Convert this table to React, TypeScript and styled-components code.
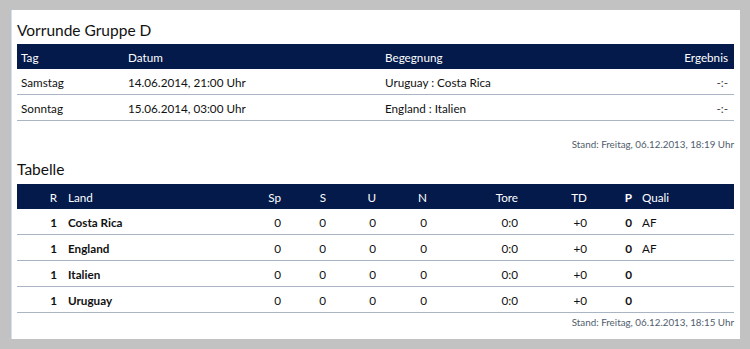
import styled, { createGlobalStyle } from 'styled-components';

const GlobalStyle = createGlobalStyle`
  html, body {
    margin: 0;
    padding: 0;
    background: #c2c2c2;
    font-family: Lato, "Noto Sans", sans-serif;
  }
`;

const Panel = styled.div`
  box-sizing: border-box;
  margin: 10px 0 0 11px;
  width: 729px;
  height: 329px;
  background: #fff;
  border-left: 1px solid #cfe2f2;
  padding: 10px 6px 0 5px;
`;

const Title = styled.h2`
  margin: 0 0 4px;
  font-size: 15.5px;
  line-height: 20px;
  font-weight: normal;
  color: #111;
`;

const Table = styled.table`
  width: 717px;
  border-collapse: collapse;
  table-layout: fixed;
  font-size: 11.7px;
  color: #111;
`;

const Head = styled.th<{ $align?: string; $bold?: boolean; $pad?: number }>`
  background: #031a4b;
  color: #fff;
  height: 25px;
  padding: 0 4px 0 ${(p) => p.$pad ?? 4}px;
  text-align: ${(p) => p.$align ?? 'left'};
  font-weight: ${(p) => (p.$bold ? 'bold' : 'normal')};
  box-sizing: border-box;
`;

const Cell = styled.td<{ $align?: string; $bold?: boolean; $pad?: number }>`
  height: 25px;
  padding: 0 4px 0 ${(p) => p.$pad ?? 4}px;
  border-bottom: 1px solid #a9b5c3;
  text-align: ${(p) => p.$align ?? 'left'};
  font-weight: ${(p) => (p.$bold ? 'bold' : 'normal')};
`;

const Result = styled(Cell)`
  padding-right: 6px;
  color: #444;
`;

const Stand = styled.div<{ $top: number }>`
  text-align: right;
  font-size: 9.8px;
  line-height: 14px;
  color: #4f5d6c;
  padding-top: ${(p) => p.$top}px;
`;

const SubTitle = styled(Title)`
  margin: 8px 0 5px;
`;

const games = [
  { tag: 'Samstag', datum: '14.06.2014, 21:00 Uhr', spiel: 'Uruguay : Costa Rica' },
  { tag: 'Sonntag', datum: '15.06.2014, 03:00 Uhr', spiel: 'England : Italien' },
];

const teams = [
  { land: 'Costa Rica', quali: 'AF' },
  { land: 'England', quali: 'AF' },
  { land: 'Italien', quali: '' },
  { land: 'Uruguay', quali: '' },
];

export default function App() {
  return (
    <>
      <GlobalStyle />
      <Panel>
        <Title>Vorrunde Gruppe D</Title>
        <Table>
          <colgroup>
            <col style={{ width: 107 }} />
            <col style={{ width: 257 }} />
            <col style={{ width: 250 }} />
            <col />
          </colgroup>
          <thead>
            <tr>
              <Head>Tag</Head>
              <Head>Datum</Head>
              <Head>Begegnung</Head>
              <Head $align="right" style={{ paddingRight: 6 }}>Ergebnis</Head>
            </tr>
          </thead>
          <tbody>
            {games.map((g) => (
              <tr key={g.tag}>
                <Cell>{g.tag}</Cell>
                <Cell>{g.datum}</Cell>
                <Cell>{g.spiel}</Cell>
                <Result $align="right">-:-</Result>
              </tr>
            ))}
          </tbody>
        </Table>
        <Stand $top={16}>Stand: Freitag, 06.12.2013, 18:19 Uhr</Stand>

        <SubTitle>Tabelle</SubTitle>
        <Table>
          <colgroup>
            <col style={{ width: 47 }} />
            <col style={{ width: 181 }} />
            <col style={{ width: 40 }} />
            <col style={{ width: 45 }} />
            <col style={{ width: 50 }} />
            <col style={{ width: 51 }} />
            <col style={{ width: 91 }} />
            <col style={{ width: 69 }} />
            <col style={{ width: 45 }} />
            <col />
          </colgroup>
          <thead>
            <tr>
              <Head $align="right" style={{ paddingRight: 7 }}>R</Head>
              <Head>Land</Head>
              <Head $align="right">Sp</Head>
              <Head $align="right">S</Head>
              <Head $align="right">U</Head>
              <Head $align="right">N</Head>
              <Head $align="right">Tore</Head>
              <Head $align="right">TD</Head>
              <Head $align="right" $bold>P</Head>
              <Head $pad={6}>Quali</Head>
            </tr>
          </thead>
          <tbody>
            {teams.map((t) => (
              <tr key={t.land}>
                <Cell $align="right" $bold style={{ paddingRight: 7 }}>1</Cell>
                <Cell $bold>{t.land}</Cell>
                <Cell $align="right">0</Cell>
                <Cell $align="right">0</Cell>
                <Cell $align="right">0</Cell>
                <Cell $align="right">0</Cell>
                <Cell $align="right">0:0</Cell>
                <Cell $align="right">+0</Cell>
                <Cell $align="right" $bold>0</Cell>
                <Cell $pad={6}>{t.quali}</Cell>
              </tr>
            ))}
          </tbody>
        </Table>
        <Stand $top={2}>Stand: Freitag, 06.12.2013, 18:15 Uhr</Stand>
      </Panel>
    </>
  );
}
